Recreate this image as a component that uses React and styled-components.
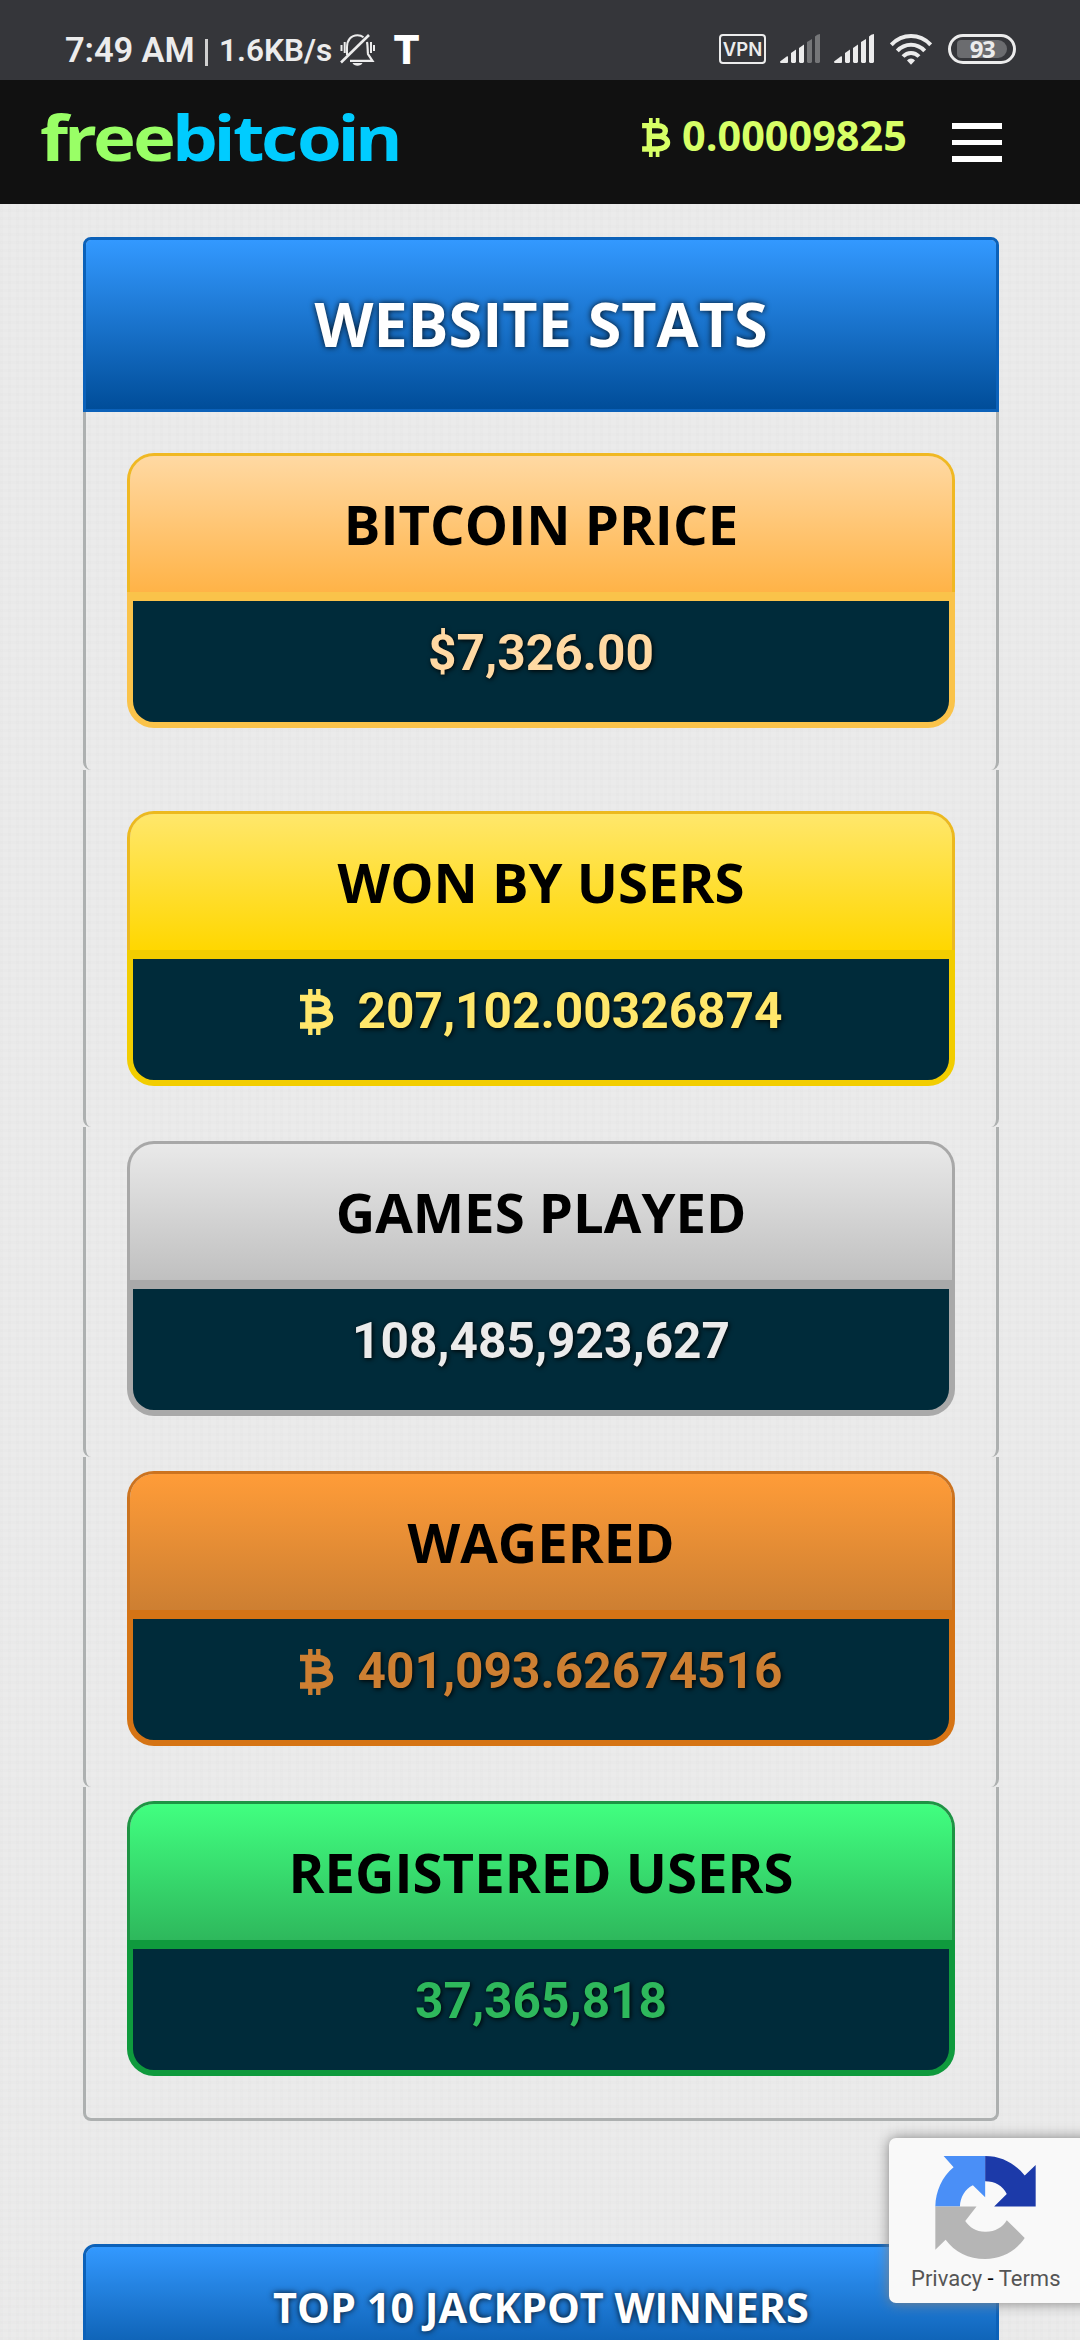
import React from "react";
import styled, { createGlobalStyle } from "styled-components";

const GlobalStyle = createGlobalStyle`
  body {
    margin: 0;
  }

  * {
    box-sizing: border-box;
  }
`;

const Page = styled.div`
  position: relative;
  width: 1080px;
  height: 2340px;
  overflow: hidden;
  font-family: "Open Sans", sans-serif;
  background-color: #ebebeb;
  background-image: repeating-linear-gradient(
      0deg,
      rgba(0, 0, 0, 0.008) 0 3px,
      transparent 3px 8px
    ),
    repeating-linear-gradient(
      90deg,
      rgba(0, 0, 0, 0.008) 0 3px,
      transparent 3px 8px
    );
`;

const StatusBar = styled.div`
  display: flex;
  justify-content: space-between;
  height: 80px;
  padding: 34px 64px 0 65px;
  background: #35363a;
  color: #ececec;
  font-family: Roboto, sans-serif;
`;

const StatusGroup = styled.div`
  display: flex;
  align-items: flex-start;
  height: 32px;
`;

const Clock = styled.span`
  width: 140px;
  font-size: 34.5px;
  line-height: 33px;
  font-weight: 600;
  letter-spacing: -0.1px;
  white-space: nowrap;
`;

const Divider = styled.span`
  width: 3px;
  height: 27px;
  margin: 5px 11px 0 0;
  background: #d0d0d0;
`;

const Speed = styled.span`
  width: 121px;
  font-size: 31.5px;
  line-height: 34px;
  font-weight: 600;
  white-space: nowrap;
`;

const AppMark = styled.span`
  width: 30px;
  margin-left: 17px;
  font-family: Inter, sans-serif;
  font-size: 40px;
  line-height: 31px;
  font-weight: 800;
  color: #fff;
`;

const Vpn = styled.span`
  display: flex;
  align-items: center;
  justify-content: center;
  width: 47px;
  height: 30px;
  margin-right: 14px;
  border: 2.5px solid #ececec;
  border-radius: 4px;
  font-family: Inter, sans-serif;
  font-size: 18.5px;
  font-weight: 600;
`;

const Battery = styled.span`
  width: 68px;
  height: 30px;
  margin-left: 16px;
  padding: 3px 6px;
  border: 3px solid #ececec;
  border-radius: 15px;
`;

const Charge = styled.span`
  display: block;
  height: 18px;
  border-radius: 4px 9px 9px 4px;
  background: #6b6c6f;
  font-family: "Open Sans", sans-serif;
  font-size: 24px;
  line-height: 18px;
  font-weight: 700;
  letter-spacing: -1.5px;
  text-align: center;
`;

const Header = styled.header`
  display: flex;
  align-items: flex-start;
  justify-content: space-between;
  height: 124px;
  padding: 6px 78px 0 30px;
  background: #111;
`;

const Account = styled.div`
  display: flex;
  align-items: flex-start;
`;

const Balance = styled.div`
  display: flex;
  align-items: flex-start;
  gap: 11px;
  margin-top: 32px;
  width: 310px;
  color: #d7ff66;
  font-size: 41.4px;
  line-height: 35px;
  font-weight: 700;
  white-space: nowrap;
`;

const MenuButton = styled.button`
  display: flex;
  flex-direction: column;
  gap: 11px;
  width: 50px;
  margin: 37px 0 0;
  padding: 0;
  border: none;
  background: none;
`;

const MenuBar = styled.span`
  width: 50px;
  height: 5.5px;
  background: #fff;
`;

const Panel = styled.section`
  width: 916px;
  margin: ${(props) => props.$top}px 0 0 83px;
`;

const PanelTitle = styled.h2`
  display: flex;
  align-items: center;
  justify-content: center;
  height: ${(props) => props.$height}px;
  margin: 0;
  padding-bottom: ${(props) => props.$lift}px;
  border: 3px solid #0b61b9;
  border-radius: ${(props) => props.$radius}px ${(props) => props.$radius}px 0 0;
  background: linear-gradient(#39f, #004d99) padding-box;
  color: #fff;
  font-size: ${(props) => props.$size}px;
  line-height: 1;
  font-weight: 700;
  text-shadow: 0 0 6px rgba(0, 0, 0, 0.9);
  white-space: nowrap;
`;

const Segment = styled.div`
  height: ${(props) => props.$height}px;
  padding: ${(props) => props.$pad}px 41px 0;
  border: 3px solid #adb0b0;
  border-top: none;
  border-bottom-width: ${(props) => (props.$last ? 3 : 0)}px;
  border-radius: 0 0 8px 8px;
`;

const CardTitle = styled.h3`
  display: flex;
  align-items: center;
  justify-content: center;
  height: 139px;
  margin: 0;
  border: 3px solid ${(props) => props.$line};
  border-bottom: none;
  border-radius: 27px 27px 0 0;
  background: linear-gradient(${(props) => props.$from}, ${(props) => props.$to})
    padding-box;
  color: #000;
  font-size: 54.5px;
  line-height: 1;
  font-weight: 700;
  white-space: nowrap;
`;

const CardValue = styled.div`
  display: flex;
  align-items: center;
  justify-content: center;
  gap: 24px;
  height: 136px;
  padding-bottom: 15px;
  border: 6px solid ${(props) => props.$line};
  border-top-width: 9px;
  border-radius: 0 0 27px 27px;
  background: #002b3a;
  color: ${(props) => props.$color};
  font-family: Roboto, sans-serif;
  font-size: 49.6px;
  line-height: 1;
  font-weight: 700;
  text-shadow: 1px 1px 5px #000;
  white-space: nowrap;
`;

const Captcha = styled.aside`
  position: absolute;
  top: 2138px;
  left: 889px;
  width: 210px;
  height: 165px;
  padding: 18px 0 0 22px;
  border-radius: 7px;
  background: #f9f9f9;
  box-shadow: 0 0 14px #808080;
`;

const CaptchaIcon = styled.svg`
  display: block;
  width: 101px;
  height: 103px;
  margin-left: 24px;
`;

const CaptchaLinks = styled.div`
  margin-top: 7px;
  font-family: Roboto, sans-serif;
  font-size: 22px;
  line-height: 26px;
  color: #555;
  white-space: nowrap;
`;

const Dash = styled.span`
  color: #000;
`;

const stats = [
  {
    title: "BITCOIN PRICE",
    value: "$7,326.00",
    from: "#ffd9a3",
    to: "#ffb347",
    headLine: "#f0b823",
    bodyLine: "#fac34a",
    color: "#ffd9a3",
    height: 358,
    pad: 41,
  },
  {
    title: "WON BY USERS",
    value: "207,102.00326874",
    btc: true,
    from: "#ffe76b",
    to: "#ffd700",
    headLine: "#ecb91f",
    bodyLine: "#f2cd00",
    color: "#ffe76b",
    height: 357,
    pad: 41,
  },
  {
    title: "GAMES PLAYED",
    value: "108,485,923,627",
    from: "#e9e9e9",
    to: "#c0c0c0",
    headLine: "#a8a8a8",
    bodyLine: "#a9a9a9",
    color: "#ebebeb",
    height: 330,
    pad: 14,
  },
  {
    title: "WAGERED",
    value: "401,093.62674516",
    btc: true,
    from: "#ff9c38",
    to: "#cd7f32",
    headLine: "#cc731f",
    bodyLine: "#d57415",
    color: "#cd7f32",
    height: 330,
    pad: 14,
  },
  {
    title: "REGISTERED USERS",
    value: "37,365,818",
    from: "#41ff80",
    to: "#2eb85c",
    headLine: "#1e9444",
    bodyLine: "#0f9a3d",
    color: "#2eb85c",
    height: 334,
    pad: 14,
  },
];

function BtcIcon({ width, height }) {
  return (
    <svg
      width={width}
      height={height}
      viewBox="0 0 34 46"
      fill="none"
      stroke="currentColor"
      strokeWidth="6.4"
      overflow="visible"
    >
      <path d="M0 9H18C30.5 9 30.5 21.5 18 21.5H9M18 21.5C34 21.5 34 36.5 18 36.5H0M8.5 9V36.5" />
      <path strokeWidth="4.4" d="M10.3 0V8M18.3 0V8M10.3 37V46M18.3 37V46" />
    </svg>
  );
}

function MutedBell() {
  return (
    <svg width="36" height="32" viewBox="0 0 36 32" fill="none">
      <g stroke="#ececec" strokeWidth="2">
        <path d="M7 21V13C7 6 11 1.2 17.5 1.2C20 1.2 22 2 23.5 3.2" />
        <path d="M27 8C27.8 11 27.5 16 28 20L32.5 26.8H10" strokeWidth="2.2" />
        <path d="M1.5 11V17M4.7 8V19M34 11V17M31 8V19" />
        <path d="M1 28.5L29 1" strokeWidth="2.6" />
      </g>
      <path d="M12.5 29H22.5C21 32.5 14 32.5 12.5 29Z" fill="#ececec" />
    </svg>
  );
}

const SignalIcon = styled.svg`
  margin-right: 14px;
`;

function Signal({ dim }) {
  const fade = dim ? "#757678" : "#ececec";
  return (
    <SignalIcon width="40" height="30" viewBox="0 0 40 30" fill="#ececec">
      <path d="M0 27.5L7 22.3Q8 22 8 23V28Q8 29 7 29H1Q0 29 0 27.5Z" />
      <path d="M11 19L16 15.5V28L15 29H12L11 28Z" />
      <path d="M19 14L24 10.5V28L23 29H20L19 28Z" />
      <path fill={fade} d="M27 8L32 5V28L31 29H28L27 28Z" />
      <path fill={fade} d="M35 2.5Q37 .3 40 0V28L39 29H36L35 28Z" />
    </SignalIcon>
  );
}

const WifiIcon = styled.svg`
  margin-left: 2px;
`;

function Wifi() {
  return (
    <WifiIcon
      width="42"
      height="31"
      viewBox="0 0 42 31"
      fill="none"
      stroke="#ececec"
      strokeWidth="4"
    >
      <path d="M1.3 10.8C12.5-.8 29.5-.8 40.7 10.8" />
      <path d="M7.3 16.8C15 8.6 27 8.6 34.7 16.8" />
      <path d="M13 22.5C17.5 17.7 24.5 17.7 29 22.5" />
      <path
        d="M17 26.5C19 23.8 23 23.8 25 26.5L21 30.8Z"
        fill="#ececec"
        stroke="none"
      />
    </WifiIcon>
  );
}

// wide, tightly set wordmark
function Logo() {
  return (
    <svg
      width="380"
      height="110"
      viewBox="30 86 380 110"
      fontFamily="Open Sans, sans-serif"
      fontWeight="700"
      fontSize="62"
    >
      <g transform="scale(1.17 1)">
        <text x="34.2 54.7 79.5 113.7" y="161" fill="#99ff66">
          free
        </text>
        <text
          x="147 182.5 199.1 223.1 253.8 288.5 303.4"
          y="161"
          fill="#00ccff"
        >
          bitcoin
        </text>
      </g>
    </svg>
  );
}

function StatCard({ stat, last }) {
  return (
    <Segment $height={stat.height} $pad={stat.pad} $last={last}>
      <CardTitle $from={stat.from} $to={stat.to} $line={stat.headLine}>
        {stat.title}
      </CardTitle>
      <CardValue $line={stat.bodyLine} $color={stat.color}>
        {stat.btc && <BtcIcon width={34} height={46} />}
        <span>{stat.value}</span>
      </CardValue>
    </Segment>
  );
}

export default function App() {
  return (
    <Page>
      <GlobalStyle />
      <StatusBar>
        <StatusGroup>
          <Clock>7:49 AM</Clock>
          <Divider />
          <Speed>1.6KB/s</Speed>
          <MutedBell />
          <AppMark>T</AppMark>
        </StatusGroup>
        <StatusGroup>
          <Vpn>VPN</Vpn>
          <Signal dim />
          <Signal />
          <Wifi />
          <Battery>
            <Charge>93</Charge>
          </Battery>
        </StatusGroup>
      </StatusBar>
      <Header>
        <Logo />
        <Account>
          <Balance>
            <BtcIcon width={29} height={39} />
            <span>0.00009825</span>
          </Balance>
          <MenuButton>
            <MenuBar />
            <MenuBar />
            <MenuBar />
          </MenuButton>
        </Account>
      </Header>
      <Panel $top={33}>
        <PanelTitle $height={175} $size={61} $lift={2} $radius={8}>
          WEBSITE STATS
        </PanelTitle>
        {stats.map((stat, i) => (
          <StatCard
            key={stat.title}
            stat={stat}
            last={i === stats.length - 1}
          />
        ))}
      </Panel>
      <Panel $top={123}>
        <PanelTitle $height={140} $size={41.4} $lift={13} $radius={12}>
          TOP 10 JACKPOT WINNERS
        </PanelTitle>
      </Panel>
      <Captcha>
        <CaptchaIcon viewBox="225 229 302 310">
          <path
            fill="#4a8ff7"
            d="M250 229H375V353L338 317C315 328 300 352 299 381H225C226 335 245 292 280 263Z"
          />
          <path
            fill="#1c3aa9"
            d="M375 229C425 229 465 252 494 288L527 256V381H402L440 343C428 318 404 305 375 305Z"
          />
          <path
            fill="#b5b5b5"
            d="M225 381H349L315 425C328 445 350 458 377 457C405 456 428 443 440 422L494 476C468 515 425 539 375 539C325 539 283 518 256 481L225 511Z"
          />
        </CaptchaIcon>
        <CaptchaLinks>
          Privacy <Dash>-</Dash> Terms
        </CaptchaLinks>
      </Captcha>
    </Page>
  );
}
